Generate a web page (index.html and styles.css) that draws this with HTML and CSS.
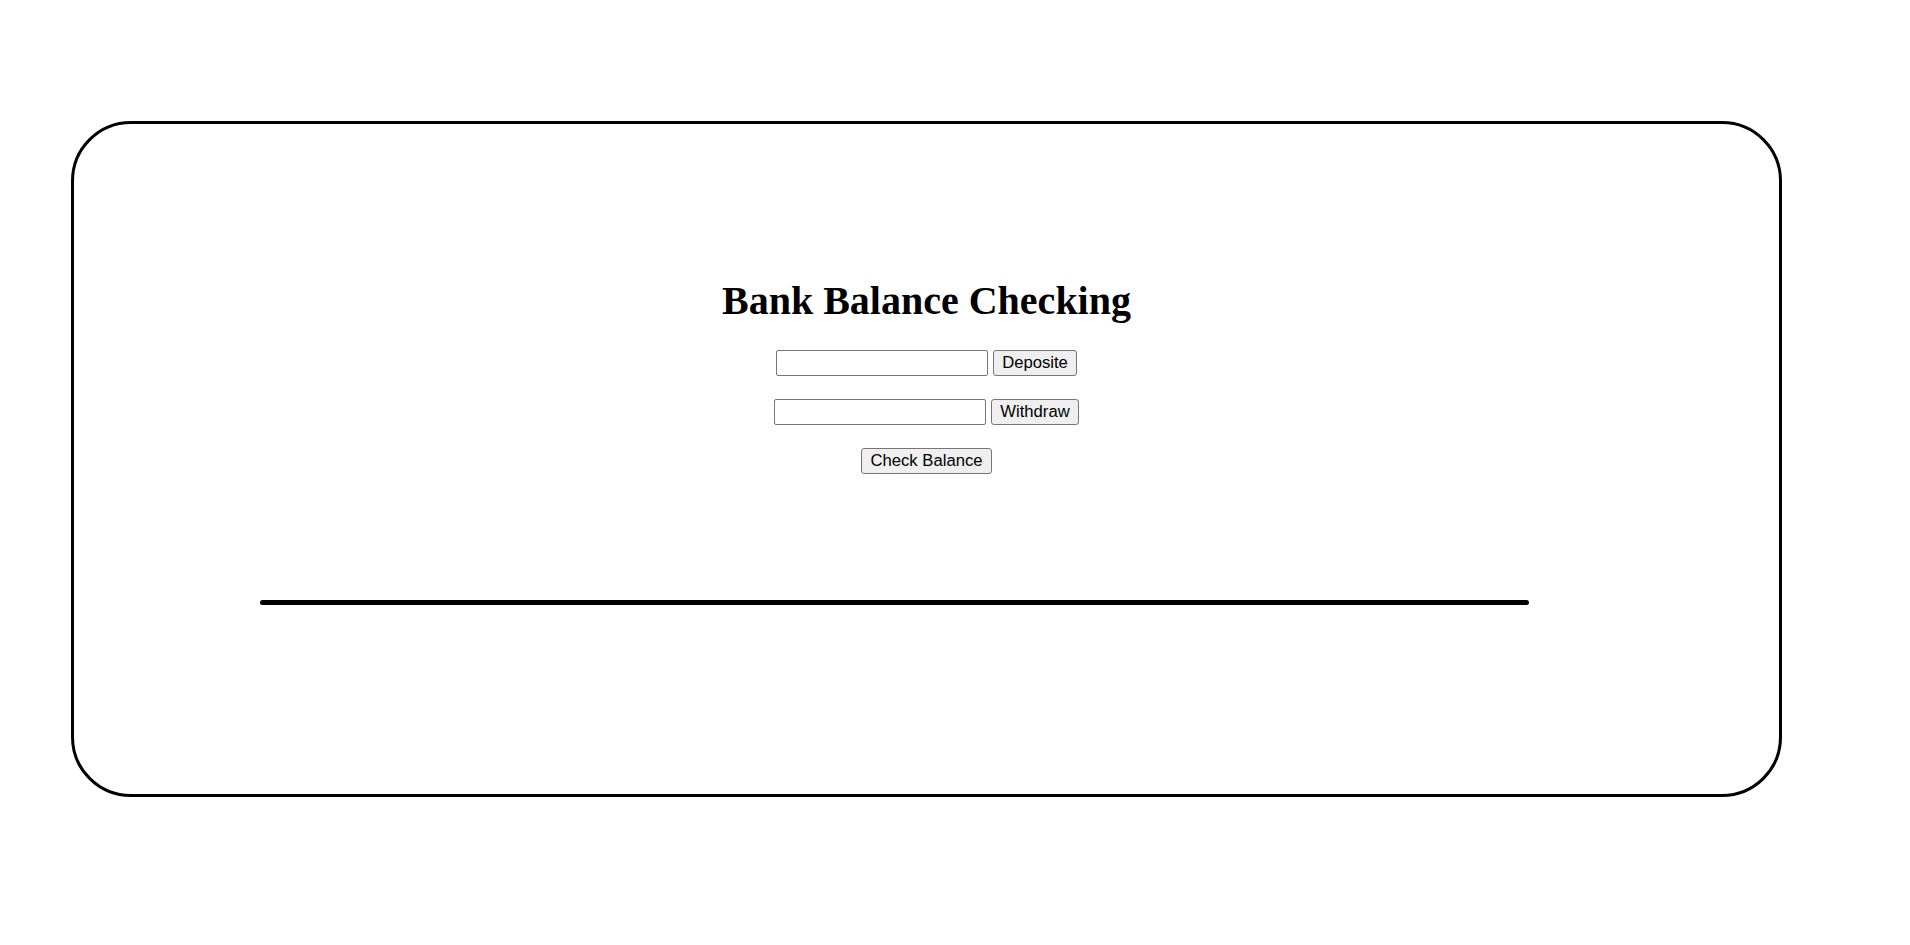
FILE: index.html
```html
<!DOCTYPE html>
<html lang="en">
<head>
<meta charset="utf-8">
<title>Bank Balance Checking</title>
<link rel="stylesheet" href="styles.css">
</head>
<body>
<div class="card">
  <h1 class="title">Bank Balance Checking</h1>
  <div class="row">
    <input class="field" type="text">
    <button class="btn">Deposite</button>
  </div>
  <div class="row">
    <input class="field" type="text">
    <button class="btn">Withdraw</button>
  </div>
  <div class="row">
    <button class="btn">Check Balance</button>
  </div>
  <div class="rule"></div>
</div>
</body>
</html>
```
FILE: styles.css
```css
html, body {
  margin: 0;
  padding: 0;
  background: #ffffff;
}

body {
  font-family: "Liberation Serif", "Times New Roman", serif;
  padding-top: 121px;
  padding-left: 71px;
}

.card {
  box-sizing: border-box;
  width: 1711px;
  height: 676px;
  border: 3px solid #000000;
  border-radius: 60px;
  display: flex;
  flex-direction: column;
  align-items: center;
  padding-top: 154px;
}

.title {
  margin: 0;
  font-family: "Liberation Serif", "Times New Roman", serif;
  font-weight: bold;
  font-size: 40px;
  line-height: 46px;
  color: #000000;
}

.row {
  display: flex;
  align-items: center;
  gap: 5px;
  height: 26px;
  margin-top: 23px;
}

.row:first-of-type {
  margin-top: 26px;
}

.field {
  box-sizing: border-box;
  width: 212px;
  height: 26px;
  border: 1px solid #767676;
  border-radius: 2px;
  padding: 1px 3px;
  margin: 0;
  background: #ffffff;
  font-family: "Liberation Sans", Arial, sans-serif;
  font-size: 16.67px;
}

.btn {
  box-sizing: border-box;
  height: 26px;
  margin: 0;
  padding: 1px 8px;
  border: 1px solid #767676;
  border-radius: 3px;
  background: #efefef;
  color: #000000;
  font-family: "Liberation Sans", Arial, sans-serif;
  font-size: 16.67px;
  line-height: 20px;
}

.rule {
  align-self: flex-start;
  margin-left: 186px;
  margin-top: 126px;
  width: 1269px;
  height: 5px;
  border-radius: 3px;
  background: #000000;
}
```
